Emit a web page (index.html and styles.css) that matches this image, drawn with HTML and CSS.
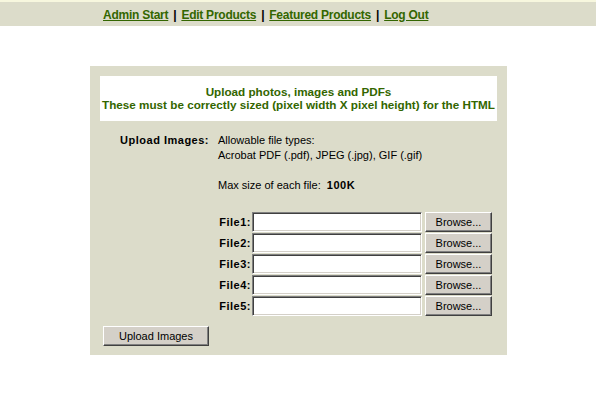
FILE: index.html
```html
<!DOCTYPE html>
<html>
<head>
<meta charset="utf-8">
<link rel="stylesheet" href="styles.css">
</head>
<body>
<div class="topbar">
  <nav class="nav">
    <a href="#">Admin Start</a><span class="sep">|</span><a href="#">Edit Products</a><span class="sep">|</span><a href="#">Featured Products</a><span class="sep">|</span><a href="#">Log Out</a>
  </nav>
</div>
<div class="panel">
  <div class="notice">
    <div>Upload photos, images and PDFs</div>
    <div>These must be correctly sized (pixel width X pixel height) for the HTML</div>
  </div>
  <div class="form">
    <div class="label">Upload Images:</div>
    <div class="info">
      <div>Allowable file types:</div>
      <div>Acrobat PDF (.pdf), JPEG (.jpg), GIF (.gif)</div>
      <div class="max">Max size of each file: &nbsp;<b>100K</b></div>
      <div class="files">
        <div class="frow"><span class="flabel">File1:</span><span class="input"></span><span class="btn browse">Browse...</span></div>
        <div class="frow"><span class="flabel">File2:</span><span class="input"></span><span class="btn browse">Browse...</span></div>
        <div class="frow"><span class="flabel">File3:</span><span class="input"></span><span class="btn browse">Browse...</span></div>
        <div class="frow"><span class="flabel">File4:</span><span class="input"></span><span class="btn browse">Browse...</span></div>
        <div class="frow"><span class="flabel">File5:</span><span class="input"></span><span class="btn browse">Browse...</span></div>
      </div>
    </div>
  </div>
  <div class="actions"><span class="btn submit">Upload Images</span></div>
</div>
</body>
</html>
```
FILE: styles.css
```css
html, body {
  margin: 0;
  padding: 0;
  background: #ffffff;
  font-family: "Liberation Sans", Arial, sans-serif;
  font-size: 11px;
  color: #000;
}
.topbar {
  border-top: 2px solid #f7f7de;
  background: #dcdcca;
  height: 24px;
  display: flex;
  align-items: center;
}
.nav {
  padding-left: 103px;
  padding-top: 1px;
  font-weight: bold;
  font-size: 12px;
  letter-spacing: -0.25px;
}
.nav a {
  color: #336600;
  text-decoration: underline;
}
.sep {
  margin: 0 5px;
  color: #000;
}
.panel {
  margin: 40px 0 0 90px;
  width: 397px;
  height: 269px;
  padding: 10px;
  background: #dcdcca;
}
.notice {
  background: #fff;
  height: 45px;
  box-sizing: border-box;
  padding-top: 9px;
  text-align: center;
  color: #336600;
  font-weight: bold;
  font-size: 11.7px;
  line-height: 13px;
}
.form {
  display: flex;
  margin-top: 12px;
  line-height: 15px;
}
.label {
  width: 109px;
  text-align: right;
  font-weight: bold;
  letter-spacing: 0.5px;
  color: #000;
}
.info {
  margin-left: 9px;
  color: #000;
}
.info b {
  letter-spacing: 0.5px;
}
.max {
  margin-top: 15px;
}
.files {
  margin-top: 19px;
  display: flex;
  flex-direction: column;
  gap: 1px;
}
.frow {
  display: flex;
  align-items: center;
  height: 20px;
}
.flabel {
  width: 33px;
  text-align: right;
  font-weight: bold;
  letter-spacing: 0.5px;
  margin-right: 1px;
}
.input {
  width: 170px;
  height: 20px;
  box-sizing: border-box;
  background: #fff;
  border-style: solid;
  border-width: 1px;
  border-color: #808080 #ffffff #ffffff #808080;
  box-shadow: inset 1px 1px 0 #404040, inset -1px -1px 0 #d4d0c8;
  margin-right: 3px;
}
.btn {
  display: flex;
  align-items: center;
  justify-content: center;
  background: #d4d0c8;
  border-style: solid;
  border-width: 1px;
  border-color: #ffffff #404040 #404040 #ffffff;
  box-shadow: inset -1px -1px 0 #808080;
  box-sizing: border-box;
  height: 20px;
  font-size: 11px;
}
.browse {
  width: 67px;
}
.actions {
  margin-top: 10px;
  padding-left: 3px;
}
.submit {
  width: 106px;
}
```
